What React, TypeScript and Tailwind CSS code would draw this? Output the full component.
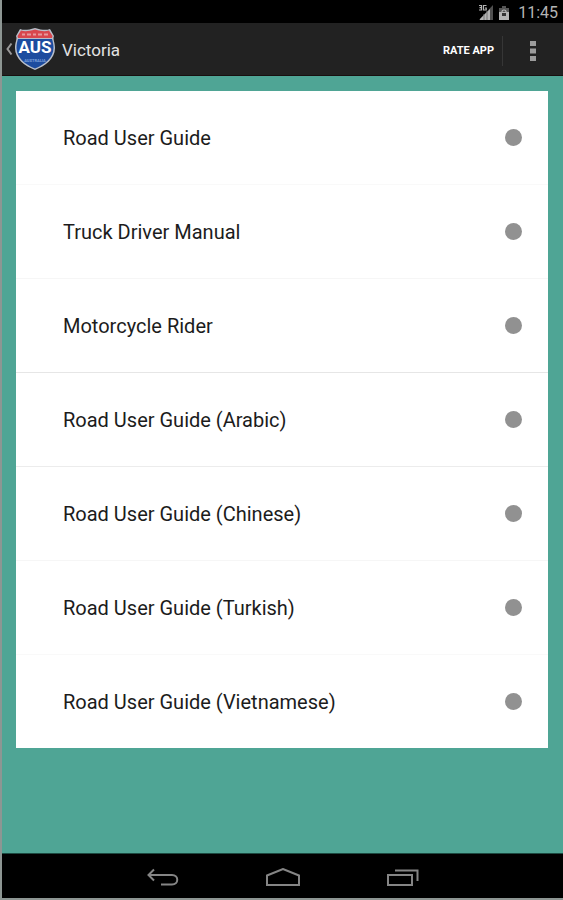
import * as React from "react"

const GUIDES = [
  { label: "Road User Guide", divider: "border-[#f9f9f9]" },
  { label: "Truck Driver Manual", divider: "border-[#f6f6f6]" },
  { label: "Motorcycle Rider", divider: "border-[#e6e6e6]" },
  { label: "Road User Guide (Arabic)", divider: "border-[#ececec]" },
  { label: "Road User Guide (Chinese)", divider: "border-[#f6f6f6]" },
  { label: "Road User Guide (Turkish)", divider: "border-[#f9f9f9]" },
  { label: "Road User Guide (Vietnamese)", divider: "border-white" },
]

const ShieldLogo: React.FC = () => (
  <svg width="42" height="44" viewBox="0 0 42 44" aria-hidden="true">
    <path
      d="M6 2C10 3.500 14 3 21 1C28 3 32 3.500 36 2L40 9C38.500 12 41 15 41 21C41 32 31 39 21 43C11 39 1 32 1 21C1 15 3.500 12 2 9Z"
      fill="#b9bfca"
    />
    <path
      d="M7 3.500C11 4.800 15 4.300 21 2.500C27 4.300 31 4.800 35 3.500L38.500 9L38 11H4L3.500 9Z"
      fill="#d8474e"
    />
    <path
      d="M4 12H38C38.800 15 39.500 17 39.500 21C39.500 31 30.500 37.500 21 41.500C11.500 37.500 2.500 31 2.500 21C2.500 17 3.200 15 4 12Z"
      fill="#1d4c9f"
    />
    <path
      d="M8 7.500h3M13 7.500h4M19 7.500h3M24 7.500h4M30 7.500h4"
      stroke="#e69a9d"
      strokeWidth="2"
    />
    <text
      x="21"
      y="26"
      textAnchor="middle"
      fill="#ffffff"
      className="font-[Roboto,sans-serif] text-[17px] font-bold"
    >
      AUS
    </text>
    <text
      x="21"
      y="35"
      textAnchor="middle"
      fill="#7fa2dc"
      className="font-[Roboto,sans-serif] text-[4px] font-bold"
    >
      AUSTRALIA
    </text>
  </svg>
)

const StatusBar: React.FC = () => (
  <div className="flex h-[23px] items-center justify-end gap-1 bg-black pr-[5px] pt-0.5 text-[#b4b4b4]">
    <svg width="16" height="17" viewBox="0 0 16 17" aria-hidden="true">
      <path d="M15 1V16H1Z" fill="#505050" />
      <path d="M12 5V16H2V15Z" fill="#b4b4b4" />
      <path d="M6 10v6M9 7v9" stroke="#777777" strokeWidth="1" />
      <path d="M0 0H9V7H0Z" fill="#000000" />
      <path
        d="M1 1.500H3.500V6H1M1.500 3.700H3.500M8.500 1.500H5.500V6H8.200V4H7"
        fill="none"
        stroke="#b4b4b4"
        strokeWidth="1.200"
      />
    </svg>
    <svg width="12" height="16" viewBox="0 0 12 16" aria-hidden="true">
      <path d="M4 1H8V3H11V7H1V3H4Z" fill="#555555" />
      <path d="M1 7H11V15H1Z" fill="#b4b4b4" />
      <path
        d="M4 8V6.500C4 4.500 8 4.500 8 6.500V8"
        fill="none"
        stroke="#b4b4b4"
        strokeWidth="1.200"
      />
      <path d="M4 8H8V11H4Z" fill="#333333" />
    </svg>
    <span className="ml-1 text-base leading-none">11:45</span>
  </div>
)

const ActionBar: React.FC = () => (
  <header className="flex h-[53px] items-center border-b border-[#181010] bg-[#222222] pt-1 text-[#e2e2e2]">
    <button type="button" aria-label="Back" className="flex items-center pb-1 pl-1">
      <svg width="8" height="16" viewBox="0 0 8 16" aria-hidden="true">
        <path
          d="M5.500 2.500L1.500 8L5.500 13.500"
          fill="none"
          stroke="#999999"
          strokeWidth="2"
        />
      </svg>
      <ShieldLogo />
    </button>
    <h1 className="ml-1.5 flex-1 text-[17px]">Victoria</h1>
    <button type="button" className="pr-2 text-[11px] font-bold text-white">
      RATE APP
    </button>
    <div className="h-[30px] w-px bg-[#363636]" />
    <button
      type="button"
      aria-label="More options"
      className="flex h-full w-[60px] items-center justify-center"
    >
      <svg width="6" height="20" viewBox="0 0 6 20" aria-hidden="true">
        <path d="M0 0h6v5H0zM0 7.500h6v5H0zM0 15h6v5H0z" fill="#9c9c9c" />
      </svg>
    </button>
  </header>
)

const NavBar: React.FC = () => (
  <nav className="flex h-[45px] items-center justify-center gap-[86px] border-t border-[#1c4a41] bg-black pt-1">
    <button type="button" aria-label="Go back">
      <svg width="34" height="20" viewBox="0 0 34 20" aria-hidden="true">
        <path
          d="M8 1.500L2.500 7L8 12.500M3 7H26C33 7 33 16.500 26 16.500H15"
          fill="none"
          stroke="#858585"
          strokeWidth="2"
        />
      </svg>
    </button>
    <button type="button" aria-label="Home">
      <svg width="34" height="20" viewBox="0 0 34 20" aria-hidden="true">
        <path
          d="M1 17V7.500L17 1L33 7.500V17Z"
          fill="none"
          stroke="#858585"
          strokeWidth="2"
        />
      </svg>
    </button>
    <button type="button" aria-label="Recent apps">
      <svg width="34" height="20" viewBox="0 0 34 20" aria-hidden="true">
        <path
          d="M2 7H26V17H2ZM9 2.500H31.500V13"
          fill="none"
          stroke="#858585"
          strokeWidth="2"
        />
      </svg>
    </button>
  </nav>
)

const App: React.FC = () => {
  return (
    <div className="flex min-h-screen flex-col border-b-2 border-l-2 border-[#8d9693] bg-[#4fa595] font-[Roboto,sans-serif]">
      <StatusBar />
      <ActionBar />
      <main className="flex-1 pb-4 pl-3.5 pr-[15px] pt-[15px]">
        <ul className="bg-white">
          {GUIDES.map(({ label, divider }) => (
            <li key={label} className={`border-b last:border-b-0 ${divider}`}>
              <button
                type="button"
                className="flex h-[93px] w-full items-center justify-between pl-[47px] pr-[26px] text-left text-xl text-[#1c1c1c]"
              >
                {label}
                <span className="size-[17px] rounded-full bg-[#919191]" />
              </button>
            </li>
          ))}
        </ul>
      </main>
      <NavBar />
    </div>
  )
}

export default App
